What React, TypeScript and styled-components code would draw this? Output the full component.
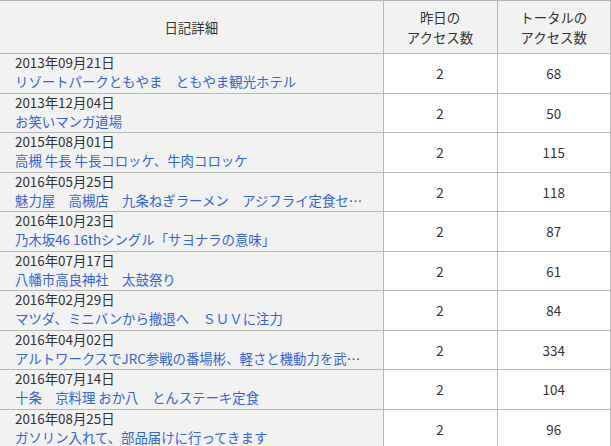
import styled, { createGlobalStyle } from "styled-components";

interface DiaryRow {
  date: string;
  title: string;
  yesterday: number;
  total: number;
}

const rows: DiaryRow[] = [
  { date: "2013年09月21日", title: "リゾートパークともやま　ともやま観光ホテル", yesterday: 2, total: 68 },
  { date: "2013年12月04日", title: "お笑いマンガ道場", yesterday: 2, total: 50 },
  { date: "2015年08月01日", title: "高槻 牛長 牛長コロッケ、牛肉コロッケ", yesterday: 2, total: 115 },
  { date: "2016年05月25日", title: "魅力屋　高槻店　九条ねぎラーメン　アジフライ定食セット", yesterday: 2, total: 118 },
  { date: "2016年10月23日", title: "乃木坂46 16thシングル「サヨナラの意味」", yesterday: 2, total: 87 },
  { date: "2016年07月17日", title: "八幡市高良神社　太鼓祭り", yesterday: 2, total: 61 },
  { date: "2016年02月29日", title: "マツダ、ミニバンから撤退へ　ＳＵＶに注力", yesterday: 2, total: 84 },
  { date: "2016年04月02日", title: "アルトワークスでJRC参戦の番場彬、軽さと機動力を武器に", yesterday: 2, total: 334 },
  { date: "2016年07月14日", title: "十条　京料理 おか八　とんステーキ定食", yesterday: 2, total: 104 },
  { date: "2016年08月25日", title: "ガソリン入れて、部品届けに行ってきます", yesterday: 2, total: 96 },
];

const GlobalStyle = createGlobalStyle`
  body {
    margin: 0;
    background: #ffffff;
    font-family: "Noto Sans CJK JP", "Noto Sans", sans-serif;
    color: #333333;
  }
`;

function AccessTable() {
  return (
    <>
      <GlobalStyle />
      <Table>
        <colgroup>
          <col style={{ width: 383 }} />
          <col style={{ width: 114 }} />
          <col />
        </colgroup>
        <thead>
          <tr>
            <HeadCell>日記詳細</HeadCell>
            <HeadCell>
              昨日の
              <br />
              アクセス数
            </HeadCell>
            <HeadCell>
              トータルの
              <br />
              アクセス数
            </HeadCell>
          </tr>
        </thead>
        <tbody>
          {rows.map(row => (
            <tr key={row.date + row.title}>
              <DetailCell>
                <DateLine>{row.date}</DateLine>
                <TitleLink href="#">{row.title}</TitleLink>
              </DetailCell>
              <NumberCell>{row.yesterday}</NumberCell>
              <NumberCell>{row.total}</NumberCell>
            </tr>
          ))}
        </tbody>
      </Table>
    </>
  );
}

const Table = styled.table`
  width: 611px;
  border-collapse: collapse;
  table-layout: fixed;
  font-size: 13.4px;
  border-top: 1px solid #b5b5b5;
`;

const HeadCell = styled.th`
  height: 52px;
  padding: 0;
  background: #f2f2f2;
  border: 1px solid #b8b8b8;
  border-top: none;
  font-weight: normal;
  line-height: 20px;
  text-align: center;
  vertical-align: middle;
  color: #333333;

  &:first-child {
    border-left: none;
  }
`;

const DetailCell = styled.td`
  height: 38.5px;
  padding: 0 16px 0 15px;
  background: #f2f2f2;
  border-bottom: 1px solid #b8b8b8;
  border-right: 1px solid #b8b8b8;
  vertical-align: top;
  overflow: hidden;
`;

const DateLine = styled.div`
  color: #333333;
  height: 17px;
  line-height: 17px;
  white-space: nowrap;
`;

const TitleLink = styled.a`
  display: block;
  height: 21px;
  color: #3366dd;
  line-height: 21px;
  text-decoration: none;
  white-space: nowrap;
  overflow: hidden;
  text-overflow: ellipsis;
`;

const NumberCell = styled.td`
  height: 38.5px;
  padding: 0;
  background: #ffffff;
  border-bottom: 1px solid #b8b8b8;
  border-right: 1px solid #b8b8b8;
  text-align: center;
  vertical-align: middle;
  color: #333333;
`;

export default AccessTable;
